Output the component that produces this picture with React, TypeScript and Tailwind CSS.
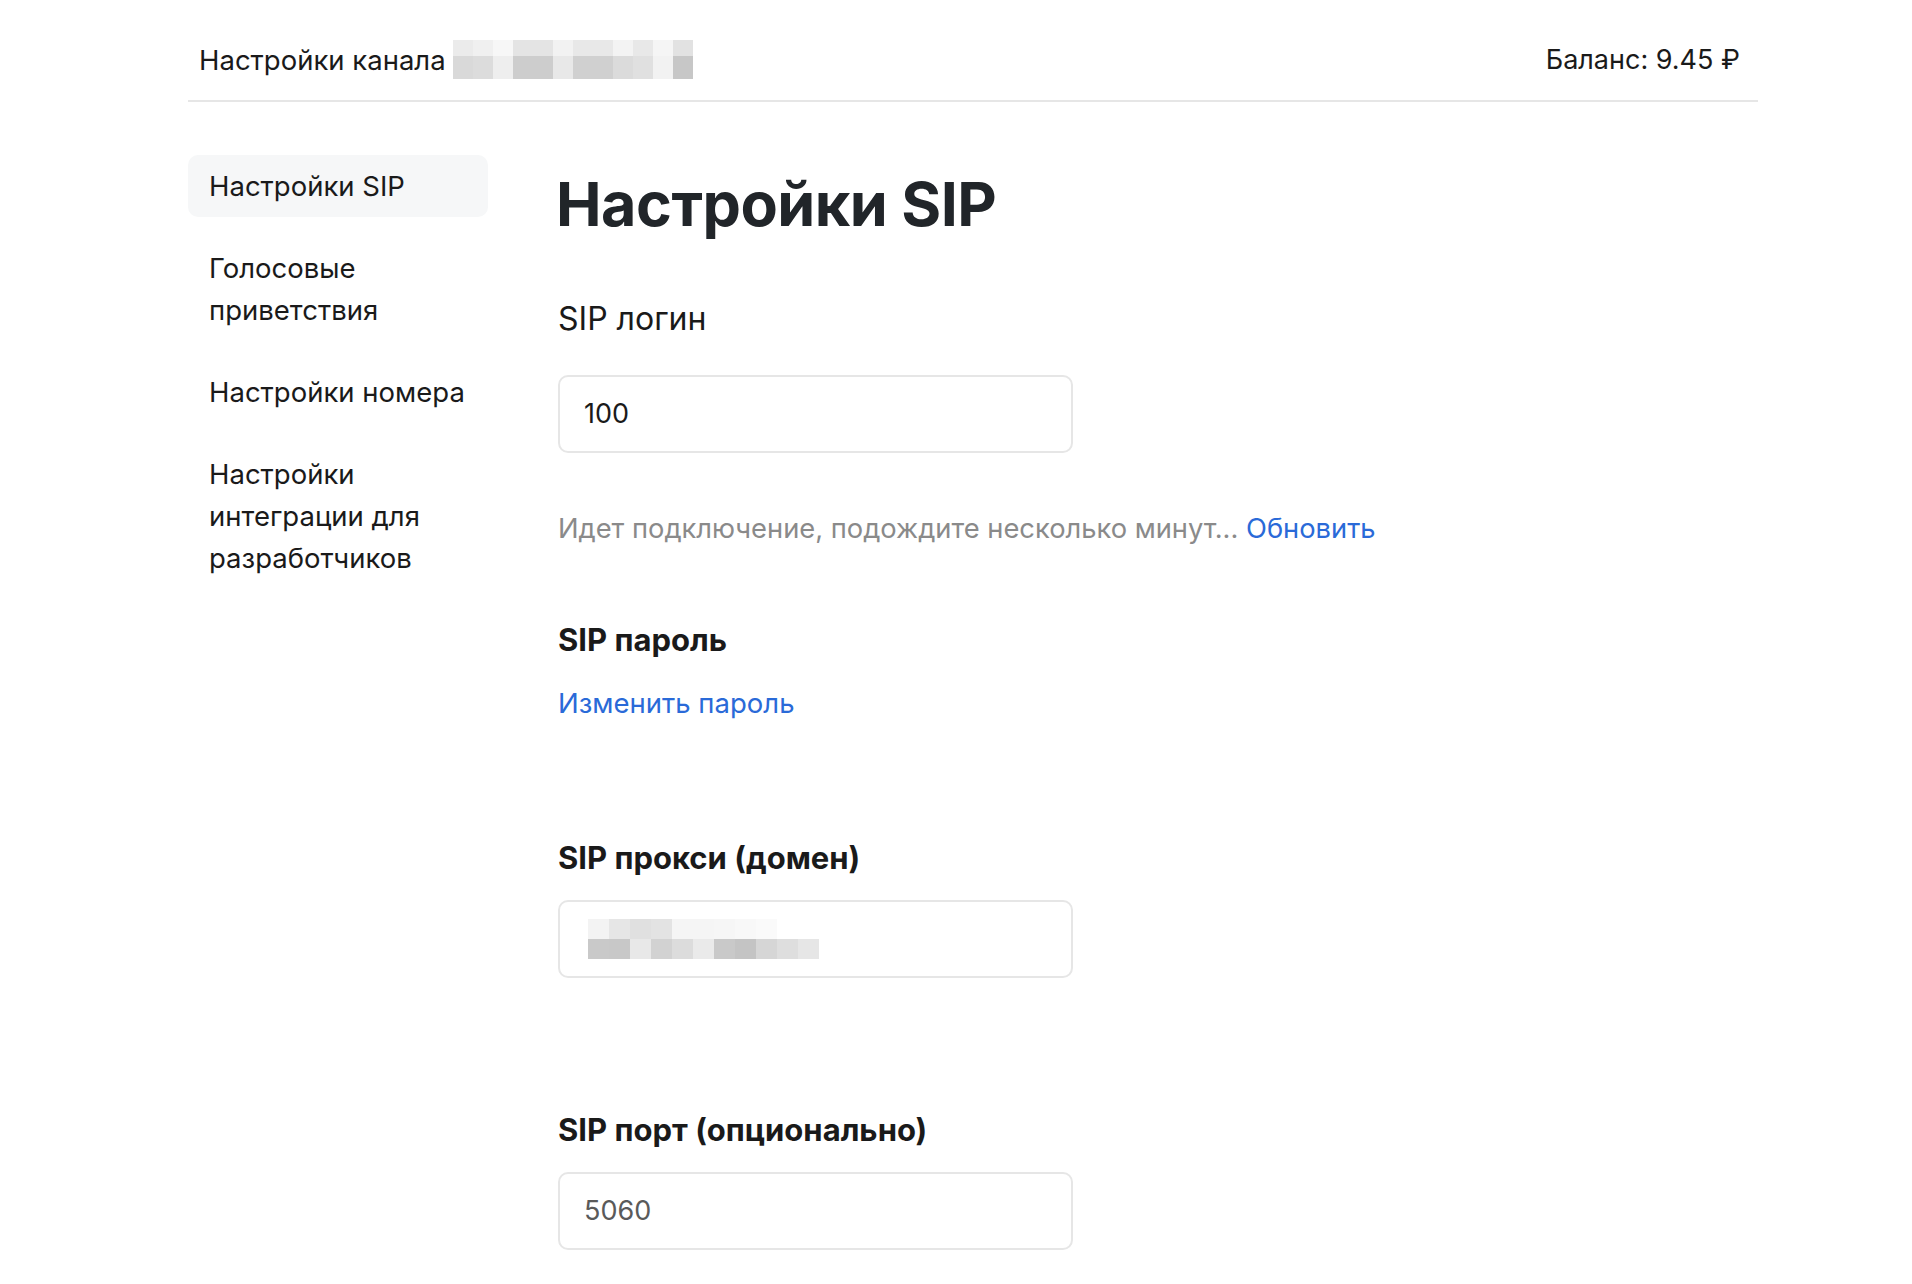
import React from "react";

const headerBlur = {
  top: [
    "bg-[#ebebeb]", "bg-[#f0f0f0]", "bg-[#f7f7f7]", "bg-[#e4e4e4]", "bg-[#e4e4e4]", "bg-[#f2f2f2]",
    "bg-[#e8e8e8]", "bg-[#e8e8e8]", "bg-[#f3f3f3]", "bg-[#e8e8e8]", "bg-[#f5f5f5]", "bg-[#e2e2e2]",
  ],
  bottom: [
    "bg-[#d9d9d9]", "bg-[#dcdcdc]", "bg-[#eeeeee]", "bg-[#cdcdcd]", "bg-[#cdcdcd]", "bg-[#e8e8e8]",
    "bg-[#d0d0d0]", "bg-[#d0d0d0]", "bg-[#dbdbdb]", "bg-[#e0e0e0]", "bg-[#f2f2f2]", "bg-[#c7c7c7]",
  ],
};

const proxyBlur = {
  top: [
    "bg-[#f3f3f3]", "bg-[#e6e6e6]", "bg-[#e0e0e0]", "bg-[#e3e3e3]", "bg-[#f5f5f5]", "bg-[#f5f5f5]",
    "bg-[#f6f6f6]", "bg-[#f8f8f8]", "bg-[#fafafa]", "bg-white", "bg-white",
  ],
  bottom: [
    "bg-[#c9c9c9]", "bg-[#c8c8c8]", "bg-[#e8e8e8]", "bg-[#d2d2d2]", "bg-[#dcdcdc]", "bg-[#eaeaea]",
    "bg-[#c9c9c9]", "bg-[#c4c4c4]", "bg-[#d6d6d6]", "bg-[#dedede]", "bg-[#e6e6e6]",
  ],
};

// pixelated placeholder for hidden values
const Blur = ({ rows, cell, h1, h2 }: { rows: { top: string[]; bottom: string[] }; cell: string; h1: string; h2: string }) => (
  <div className="flex flex-col">
    <div className={`flex ${h1}`}>
      {rows.top.map((c, i) => (
        <div key={i} className={`${cell} ${c}`} />
      ))}
    </div>
    <div className={`flex ${h2}`}>
      {rows.bottom.map((c, i) => (
        <div key={i} className={`${cell} ${c}`} />
      ))}
    </div>
  </div>
);

const navItems = [
  { label: "Настройки SIP", active: true },
  { label: "Голосовые приветствия" },
  { label: "Настройки номера" },
  { label: "Настройки интеграции для разработчиков" },
];

const Field = ({ children }: { children?: React.ReactNode }) => (
  <div className="flex h-[78px] w-[515px] items-center rounded-[10px] border-2 border-[#e6e6e6] bg-white pl-[24px]">
    {children}
  </div>
);

export default function App() {
  return (
    <div className="min-h-screen bg-white font-[Inter,sans-serif] text-[#1a1a1a]">
      <div className="ml-[188px] w-[1570px]">
        <header className="flex items-center justify-between border-b-2 border-[#e6e6e6] pb-[21px] pl-[11px] pr-[18px] pt-[40px]">
          <div className="flex items-center gap-[7px]">
            <span className="text-[27.5px] leading-[36px]">Настройки канала</span>
            <Blur rows={headerBlur} cell="w-[20px]" h1="h-[16px]" h2="h-[23px]" />
          </div>
          <span className="text-[27px] leading-[36px]">Баланс: 9.45 ₽</span>
        </header>

        <div className="flex gap-[70px]">
          <nav className="mt-[53px] flex w-[300px] shrink-0 flex-col gap-[20px]">
            {navItems.map((item) => (
              <div
                key={item.label}
                className={`rounded-[10px] py-[10px] pl-[21px] pr-[20px] text-[27.5px] leading-[42px] ${
                  item.active ? "bg-[#f6f7f8]" : ""
                }`}
              >
                {item.label}
              </div>
            ))}
          </nav>

          <main className="flex flex-col pt-[64px]">
            <h1 className="-ml-[2px] text-[61px] font-bold leading-[77px] tracking-[-0.5px] text-[#212529]">Настройки SIP</h1>

            <div className="mt-[56px] text-[32px] leading-[40px]">SIP логин</div>
            <div className="mt-[36px]">
              <Field>
                <span className="text-[27px] text-[#1a1a1a]">100</span>
              </Field>
            </div>

            <p className="mt-[58px] text-[27.3px] leading-[36px] text-[#8a8a8a]">
              Идет подключение, подождите несколько минут...{" "}
              <a className="text-[#2a6ad8]">Обновить</a>
            </p>

            <div className="mt-[73px] text-[31px] font-bold leading-[40px]">SIP пароль</div>
            <a className="mt-[25px] text-[27.5px] leading-[36px] text-[#2a6ad8]">Изменить пароль</a>

            <div className="mt-[117px] text-[31px] font-bold leading-[40px]">SIP прокси (домен)</div>
            <div className="mt-[22px]">
              <Field>
                <div className="ml-[4px]">
                  <Blur rows={proxyBlur} cell="w-[21px]" h1="h-[20px]" h2="h-[20px]" />
                </div>
              </Field>
            </div>

            <div className="mt-[132px] text-[31px] font-bold leading-[40px]">SIP порт (опционально)</div>
            <div className="mt-[22px] pb-[40px]">
              <Field>
                <span className="text-[27px] text-[#5a5a5a]">5060</span>
              </Field>
            </div>
          </main>
        </div>
      </div>
    </div>
  );
}
